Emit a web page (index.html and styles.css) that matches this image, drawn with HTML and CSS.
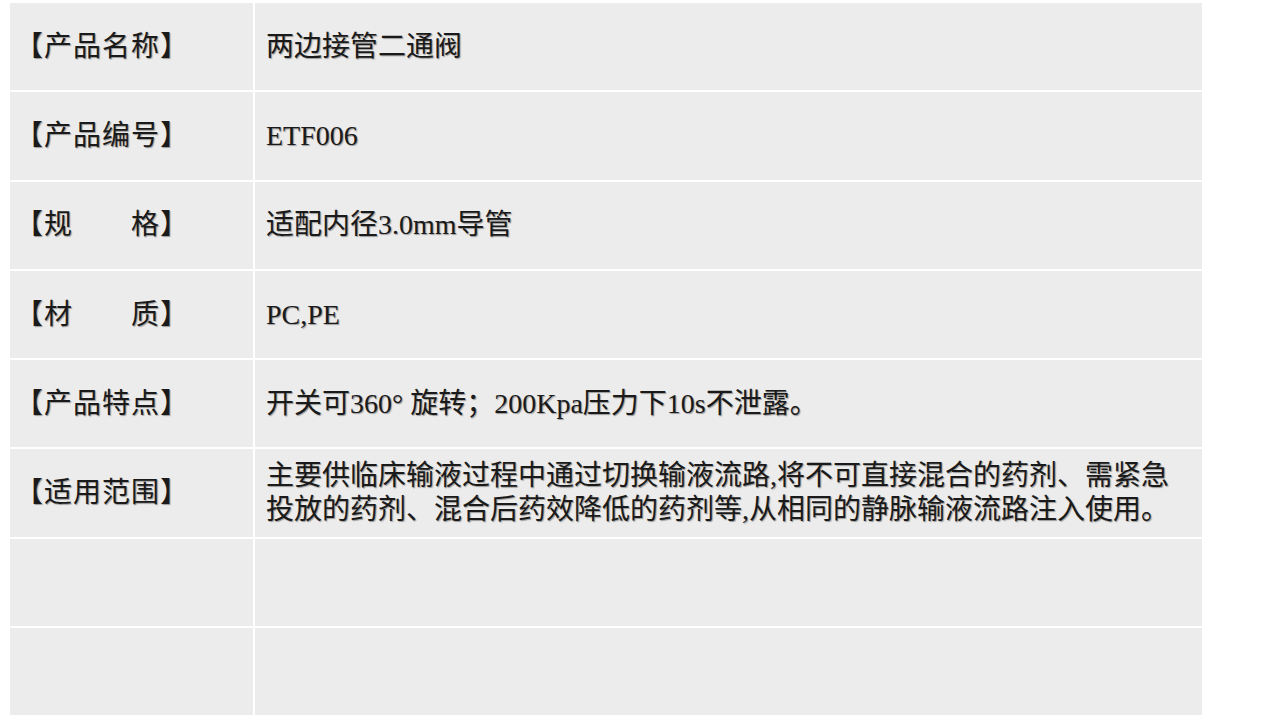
FILE: index.html
```html
<!DOCTYPE html>
<html lang="zh-CN">
<head>
    <meta charset="UTF-8">
    <meta name="viewport" content="width=device-width, initial-scale=1.0">
    <title>两边接管二通阀</title>
    <link rel="stylesheet" href="styles.css">
</head>
<body>
<table class="spec-table">
    <tr>
        <td class="label">【产品名称】</td>
        <td class="value">两边接管二通阀</td>
    </tr>
    <tr>
        <td class="label">【产品编号】</td>
        <td class="value">ETF006</td>
    </tr>
    <tr>
        <td class="label">【规　　格】</td>
        <td class="value">适配内径3.0mm导管</td>
    </tr>
    <tr>
        <td class="label">【材　　质】</td>
        <td class="value">PC,PE</td>
    </tr>
    <tr>
        <td class="label">【产品特点】</td>
        <td class="value">开关可360°&nbsp;旋转；200Kpa压力下10s不泄露。</td>
    </tr>
    <tr>
        <td class="label">【适用范围】</td>
        <td class="value">主要供临床输液过程中通过切换输液流路,将不可直接混合的药剂、需紧急投放的药剂、混合后药效降低的药剂等,从相同的静脉输液流路注入使用。</td>
    </tr>
    <tr>
        <td class="label"></td>
        <td class="value"></td>
    </tr>
    <tr>
        <td class="label"></td>
        <td class="value"></td>
    </tr>
</table>
</body>
</html>
```

FILE: styles.css
```css
body {
    margin: 1px 8px;
    background: #fff;
    font-family: "Liberation Serif", "Noto Sans CJK SC", serif;
}

.spec-table {
    border-collapse: separate;
    border-spacing: 2px;
    table-layout: fixed;
    width: 1196px;
}

.spec-table td {
    background-color: #ececec;
    height: 87.3px;
    padding: 0 11px;
    vertical-align: middle;
    font-size: 28px;
    line-height: 34px;
    color: #1a1a1a;
    text-shadow: 1px 1px 1px rgba(0, 0, 0, 0.35);
}

.spec-table .label {
    width: 243px;
    padding-left: 5px;
    letter-spacing: 1px;
    box-sizing: border-box;
}
```
